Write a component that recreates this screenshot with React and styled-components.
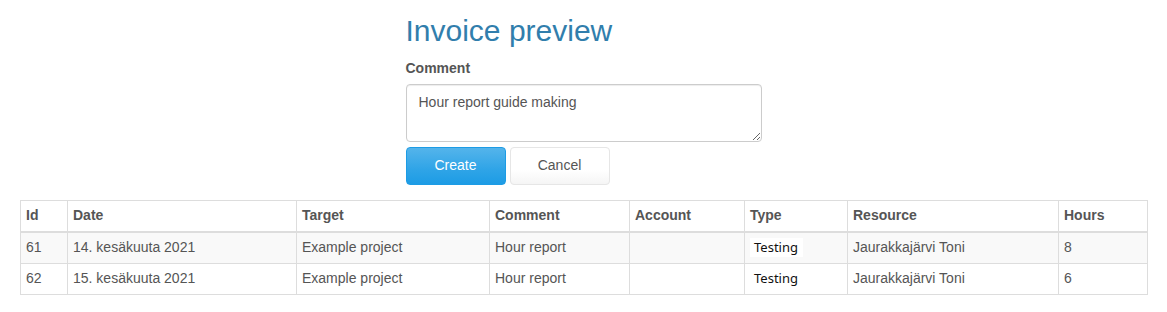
import React from 'react';
import styled, { createGlobalStyle } from 'styled-components';

const GlobalStyle = createGlobalStyle`
  body {
    margin: 0;
    background: #fff;
    font-family: "Liberation Sans", Arial, Helvetica, sans-serif;
    font-size: 14px;
    line-height: 1.42857;
    color: #555;
  }
  * {
    box-sizing: border-box;
  }
`;

const Page = styled.div`
  padding: 0 20px;
`;

const FormColumn = styled.div`
  width: 356px;
  margin: 0 auto;
`;

const Heading = styled.h2`
  margin: 14px 0 12px;
  font-size: 30px;
  font-weight: 400;
  line-height: 1.1;
  color: #317eac;
`;

const Label = styled.label`
  display: block;
  margin-bottom: 5px;
  font-weight: 700;
`;

const TextArea = styled.textarea`
  display: block;
  width: 100%;
  height: 58px;
  padding: 8px 12px;
  border: 1px solid #ccc;
  border-radius: 4px;
  font-family: inherit;
  font-size: 14px;
  line-height: 1.42857;
  color: #555;
  box-shadow: inset 0 1px 1px rgba(0, 0, 0, 0.075);
  resize: vertical;
`;

const Actions = styled.div`
  display: flex;
  gap: 4px;
  margin-top: 5px;
`;

const Button = styled.button`
  width: 100px;
  height: 38px;
  padding: 8px 12px;
  border-radius: 4px;
  font-family: inherit;
  font-size: 14px;
  line-height: 1.42857;
  cursor: pointer;
  color: ${p => (p.$primary ? '#fff' : '#555')};
  border: 1px solid ${p => (p.$primary ? '#1d9ce5' : '#e6e6e6')};
  background-image: ${p =>
    p.$primary
      ? 'linear-gradient(#54b4eb, #2fa4e7 60%, #1d9ce5)'
      : 'linear-gradient(#fff, #fff 60%, #f5f5f5)'};
`;

const Table = styled.table`
  width: 100%;
  margin-top: 15px;
  border-collapse: collapse;
  border: 1px solid #ddd;
  table-layout: fixed;
`;

const HeadCell = styled.th`
  width: ${p => p.$width}px;
  padding: 5px;
  text-align: left;
  font-weight: 700;
  border: 1px solid #ddd;
  border-bottom-width: 2px;
`;

const Row = styled.tr`
  background: ${p => (p.$striped ? '#f9f9f9' : '#fff')};
`;

const Cell = styled.td`
  padding: 5px;
  border: 1px solid #ddd;
  white-space: nowrap;
`;

const TypeTag = styled.span`
  display: inline-block;
  padding: 0 5px 0 4px;
  background: #fff;
  color: #111;
  font-family: "Noto Sans", "Open Sans", sans-serif;
  font-size: 13px;
  line-height: 19px;
`;

const columns = [
  { title: 'Id', width: 47 },
  { title: 'Date', width: 229 },
  { title: 'Target', width: 193 },
  { title: 'Comment', width: 140 },
  { title: 'Account', width: 115 },
  { title: 'Type', width: 103 },
  { title: 'Resource', width: 211 },
  { title: 'Hours', width: 89 },
];

const rows = [
  { id: 61, date: '14. kesäkuuta 2021', target: 'Example project', comment: 'Hour report', account: '', type: 'Testing', resource: 'Jaurakkajärvi Toni', hours: 8 },
  { id: 62, date: '15. kesäkuuta 2021', target: 'Example project', comment: 'Hour report', account: '', type: 'Testing', resource: 'Jaurakkajärvi Toni', hours: 6 },
];

export default function App() {
  return (
    <>
      <GlobalStyle />
      <Page>
        <FormColumn>
          <Heading>Invoice preview</Heading>
          <Label htmlFor="comment">Comment</Label>
          <TextArea id="comment" rows={2} defaultValue="Hour report guide making" />
          <Actions>
            <Button $primary>Create</Button>
            <Button>Cancel</Button>
          </Actions>
        </FormColumn>
        <Table>
          <thead>
            <tr>
              {columns.map(col => (
                <HeadCell key={col.title} $width={col.width}>
                  {col.title}
                </HeadCell>
              ))}
            </tr>
          </thead>
          <tbody>
            {rows.map((row, i) => (
              <Row key={row.id} $striped={i % 2 === 0}>
                <Cell>{row.id}</Cell>
                <Cell>{row.date}</Cell>
                <Cell>{row.target}</Cell>
                <Cell>{row.comment}</Cell>
                <Cell>{row.account}</Cell>
                <Cell>
                  <TypeTag>{row.type}</TypeTag>
                </Cell>
                <Cell>{row.resource}</Cell>
                <Cell>{row.hours}</Cell>
              </Row>
            ))}
          </tbody>
        </Table>
      </Page>
    </>
  );
}
